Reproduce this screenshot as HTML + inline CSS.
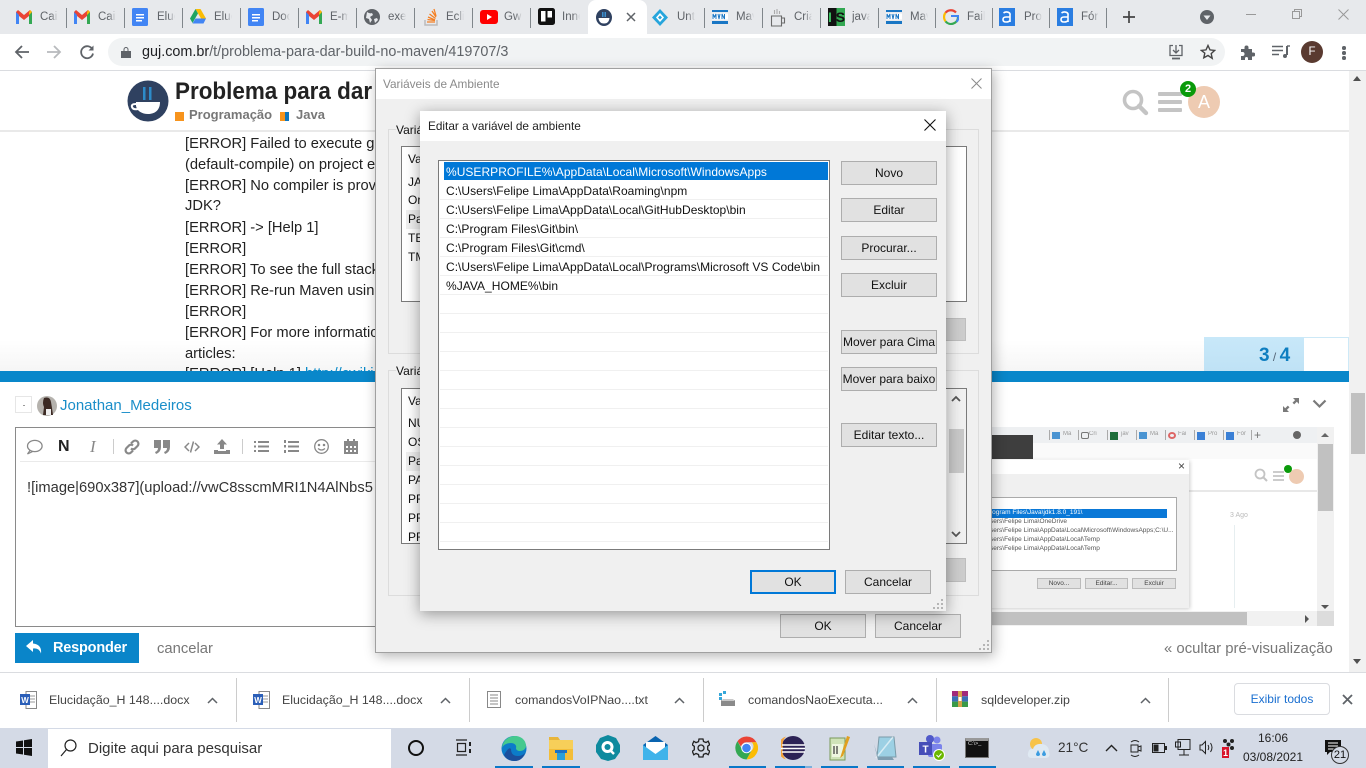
<!DOCTYPE html>
<html lang="pt-BR"><head><meta charset="utf-8"><title>Problema para dar build no maven</title>
<style>
*{box-sizing:border-box}
html,body{margin:0;padding:0;width:1366px;height:768px;overflow:hidden;background:#fff;font-family:"Liberation Sans",sans-serif}
.a,.t,svg.i{position:absolute}
.t{white-space:nowrap;line-height:20px;height:20px}
.tab{font-size:11.5px;color:#5f6368;top:7px;width:18px;overflow:hidden;-webkit-mask-image:linear-gradient(90deg,#000 60%,transparent);mask-image:linear-gradient(90deg,#000 60%,transparent)}
.sep{position:absolute;top:8px;width:1px;height:20px;background:#80868b}
.post{left:185px;font-size:14.7px;color:#222}
.btn{position:absolute;background:#e1e1e1;border:1px solid #adadad;font-size:12px;color:#111;text-align:center;line-height:22px;white-space:nowrap}
.row{position:absolute;left:446px;font-size:12px;letter-spacing:.03px;color:#111;white-space:nowrap;line-height:19px;height:19px}
.ln{position:absolute;left:440px;width:388px;height:1px;background:#f0f0f0}
.v{position:absolute;left:408px;font-size:12px;color:#111;line-height:19px;height:19px;white-space:nowrap}
.dl{font-size:12.4px;color:#444;top:690px}
.ds{position:absolute;top:678px;width:1px;height:44px;background:#ccc}
.ub{position:absolute;top:766px;height:2px;background:#0a78c8}
.mini{position:absolute;font-size:6.5px;color:#555;white-space:nowrap;filter:blur(.3px)}
.mt{position:absolute;top:5px;width:8px;height:7px}
.ms{position:absolute;top:3px;width:1px;height:10px;background:#aaa}
</style></head><body>

<!-- PAGE -->
<div class="a" style="left:0;top:71px;width:1349px;height:61px;background:#fff;border-bottom:2px solid #e9e9e9"></div>
<svg class="i" style="left:127px;top:80px" width="42" height="42" viewBox="0 0 42 42"><circle cx="21" cy="21" r="20.5" fill="#2f4160"/><rect x="16" y="7" width="2.5" height="13" fill="#2d8bc9"/><rect x="22" y="7" width="2.5" height="13" fill="#2d8bc9"/><path d="M9 22H33C33 31 27 34 21 34S10 31 9 26Z" fill="#fff"/><path d="M9 24q-5 0-4 3t6 2" stroke="#fff" stroke-width="2" fill="none"/></svg>
<div class="t" style="left:175px;top:81px;font-size:24px;line-height:22px;font-weight:bold;color:#222;transform:scaleX(.935);transform-origin:left">Problema para dar</div>
<div class="a" style="left:175px;top:112px;width:9px;height:9px;background:#f7941d"></div>
<div class="t" style="left:189px;top:105px;font-size:13px;font-weight:bold;color:#777">Programação</div>
<div class="a" style="left:280px;top:112px;width:5px;height:9px;background:#f7941d"></div><div class="a" style="left:285px;top:112px;width:4px;height:9px;background:#0e76bd"></div>
<div class="t" style="left:296px;top:105px;font-size:13px;font-weight:bold;color:#777">Java</div>
<svg class="i" style="left:1121px;top:88px" width="28" height="28" viewBox="0 0 28 28"><circle cx="12" cy="12" r="8.5" fill="none" stroke="#c4c4c4" stroke-width="3.6"/><path d="M18 18l7 7" stroke="#c4c4c4" stroke-width="4.4" stroke-linecap="round"/></svg>
<div class="a" style="left:1158px;top:92px;width:24px;height:4px;background:#c4c4c4;border-radius:1px"></div><div class="a" style="left:1158px;top:100px;width:24px;height:4px;background:#c4c4c4;border-radius:1px"></div><div class="a" style="left:1158px;top:108px;width:24px;height:4px;background:#c4c4c4;border-radius:1px"></div>
<div class="a" style="left:1188px;top:86px;width:32px;height:32px;border-radius:50%;background:#eecbb2;color:#fff;font-size:18px;line-height:33px;text-align:center">A</div>
<div class="a" style="left:1180px;top:81px;width:16px;height:16px;border-radius:50%;background:#0a9a0a;color:#fff;font-size:11px;font-weight:bold;line-height:16px;text-align:center">2</div>

<div class="a" style="left:0;top:340px;width:1349px;height:31px;background:linear-gradient(rgba(255,255,255,0),rgba(244,244,244,.85))"></div>
<div class="t post" style="top:134px">[ERROR] Failed to execute goal</div>
<div class="t post" style="top:155px">(default-compile) on project example</div>
<div class="t post" style="top:176px">[ERROR] No compiler is provided</div>
<div class="t post" style="top:196px">JDK?</div>
<div class="t post" style="top:218px">[ERROR] -&gt; [Help 1]</div>
<div class="t post" style="top:239px">[ERROR]</div>
<div class="t post" style="top:260px">[ERROR] To see the full stack trace</div>
<div class="t post" style="top:281px">[ERROR] Re-run Maven using</div>
<div class="t post" style="top:302px">[ERROR]</div>
<div class="t post" style="top:323px">[ERROR] For more information</div>
<div class="t post" style="top:344px">articles:</div>
<div class="t post" style="top:364px">[ERROR] [Help 1] <span style="color:#0a8ac8">http://cwiki</span></div>
<div class="a" style="left:1204px;top:337px;width:145px;height:34px;border:1px solid #cde9f7;border-bottom:0;background:#fff"></div>
<div class="a" style="left:1204px;top:337px;width:100px;height:34px;background:linear-gradient(#c8e8f9,#bfe2f5)"></div>
<div class="t" style="left:1259px;top:346px;font-size:19px;font-weight:bold;color:#0e7ec0">3<span style="font-size:12px;font-weight:normal;color:#567"> / </span>4</div>
<div class="a" style="left:0;top:371px;width:1349px;height:11px;background:#0987ca"></div>

<!-- editor -->
<div class="a" style="left:15px;top:396px;width:17px;height:17px;border:1px solid #e6e6e6;background:#fff"></div><div class="a" style="left:23px;top:405px;width:2px;height:1px;background:#999"></div>
<svg class="i" style="left:37px;top:396px" width="20" height="20" viewBox="0 0 20 20"><circle cx="10" cy="10" r="10" fill="#b5b2ad"/><path d="M7 2q6-2 7 4l1 6 1 7H6l1-8q-2-4 0-9Z" fill="#3c2a24"/><path d="M9 13h5v6H9Z" fill="#eee"/></svg>
<div class="t" style="left:60px;top:396px;font-size:15px;color:#1a8ec9">Jonathan_Medeiros</div>
<svg class="i" style="left:1282px;top:396px" width="18" height="18" viewBox="0 0 18 18" fill="#7a7a7a"><path d="M11 2h6v6l-2.2-2.2-2.6 2.6-1.7-1.7 2.6-2.6ZM7 16H1v-6l2.2 2.2 2.6-2.6 1.7 1.7-2.6 2.6Z"/></svg>
<svg class="i" style="left:1312px;top:398px" width="15" height="12" viewBox="0 0 15 12"><path d="M1.5 2.5L7.5 8.5 13.5 2.5" fill="none" stroke="#7a7a7a" stroke-width="2.2"/></svg>
<div class="a" style="left:15px;top:427px;width:370px;height:200px;border:1px solid #8a8a8a;background:#fff"></div>
<div class="a" style="left:20px;top:461px;width:365px;height:1px;background:#eaeaea"></div>
<svg class="i" style="left:26px;top:439px" width="17" height="16" viewBox="0 0 17 16"><ellipse cx="8.8" cy="7" rx="7.3" ry="5.6" fill="none" stroke="#888" stroke-width="1.3"/><path d="M4 11.5L1.5 15l5-2.4" fill="none" stroke="#888" stroke-width="1.2"/></svg>
<div class="t" style="left:58px;top:437px;font-size:16px;font-weight:bold;color:#222">N</div>
<div class="t" style="left:90px;top:437px;font-size:17px;font-style:italic;font-family:'Liberation Serif',serif;color:#888">I</div>
<div class="a" style="left:113px;top:439px;width:1px;height:15px;background:#ccc"></div>
<svg class="i" style="left:124px;top:439px" width="16" height="16" viewBox="0 0 16 16" fill="none" stroke="#888" stroke-width="2.2"><path d="M7 4.5l2-2a3 3 0 0 1 4.5 4.5l-2.5 2.5a3 3 0 0 1-4 0"/><path d="M9 11.5l-2 2a3 3 0 0 1-4.5-4.5L5 6.5a3 3 0 0 1 4 0"/></svg>
<svg class="i" style="left:154px;top:440px" width="16" height="14" viewBox="0 0 16 14" fill="#888"><path d="M0 0h7v7q0 5-5 7l-1-2q3-1 3-4H0ZM9 0h7v7q0 5-5 7l-1-2q3-1 3-4H9Z"/></svg>
<svg class="i" style="left:184px;top:440px" width="16" height="14" viewBox="0 0 16 14" fill="none" stroke="#888" stroke-width="1.5"><path d="M5 3L1 7l4 4M11 3l4 4-4 4M9.5 1.5L6.5 12.5"/></svg>
<svg class="i" style="left:214px;top:439px" width="16" height="15" viewBox="0 0 16 15" fill="#888"><path d="M8 0l5 5.5h-3V10H6V5.500H3ZM0 11h4v1h8v-1h4v4H0Z"/></svg>
<div class="a" style="left:242px;top:439px;width:1px;height:15px;background:#ccc"></div>
<svg class="i" style="left:254px;top:440px" width="15" height="13" viewBox="0 0 15 13" fill="#888"><path d="M0 1h2v2H0ZM4 1h11v2H4ZM0 5.500h2v2H0ZM4 5.500h11v2H4ZM0 10h2v2H0ZM4 10h11v2H4Z"/></svg>
<svg class="i" style="left:284px;top:440px" width="15" height="13" viewBox="0 0 15 13" fill="#888"><path d="M0 0h2v3H0ZM4 1h11v2H4ZM0 5h2v2.500H0ZM4 5.500h11v2H4ZM0 10h2v3H0ZM4 10h11v2H4Z"/></svg>
<svg class="i" style="left:314px;top:439px" width="15" height="15" viewBox="0 0 15 15" fill="none" stroke="#888" stroke-width="1.3"><circle cx="7.500" cy="7.500" r="6.800"/><circle cx="5" cy="6" r=".6"/><circle cx="10" cy="6" r=".6"/><path d="M4 9.500q3.500 3 7 0"/></svg>
<svg class="i" style="left:344px;top:439px" width="14" height="15" viewBox="0 0 14 15" fill="#888"><path d="M0 2h3V0h2v2h4V0h2v2h3v13H0Zm2 5v2h2V7Zm4 0v2h2V7Zm4 0v2h2V7Zm-8 4v2h2v-2Zm4 0v2h2v-2Zm4 0v2h2v-2Z"/></svg>
<div class="t" style="left:27px;top:478px;font-size:14.7px;color:#333">![image|690x387](upload://vwC8sscmMRI1N4AlNbs5</div>

<div class="a" style="left:15px;top:633px;width:124px;height:30px;background:#0a85c9"></div>
<svg class="i" style="left:26px;top:640px" width="17" height="15" viewBox="0 0 17 15" fill="#fff"><path d="M7 0L0 6l7 6V8.500q6-1 8 5 1-9-8-10Z"/></svg>
<div class="t" style="left:53px;top:638px;font-size:14.5px;font-weight:bold;color:#fff;letter-spacing:-.2px">Responder</div>
<div class="t" style="left:157px;top:639px;font-size:14.8px;color:#777">cancelar</div>
<div class="t" style="left:1164px;top:639px;font-size:14.9px;color:#777">« ocultar pré-visualização</div>

<!-- preview -->
<div class="a" style="left:985px;top:427px;width:349px;height:199px;background:#fff;overflow:hidden">
 <div class="a" style="left:0;top:0;width:349px;height:16px;background:#eef0f2"></div>
 <div class="a" style="left:0;top:16px;width:349px;height:16px;background:#fafafa"></div>
 <div class="mt" style="left:67px;background:#4a94d2;width:8px"></div><div class="mini" style="left:78px;top:4px;font-size:6px;color:#999">Ma</div><div class="ms" style="left:64px"></div>
 <div class="mini" style="left:104px;top:4px;font-size:6px;color:#999">Cri</div><div class="ms" style="left:93px"></div>
 <div class="mt" style="left:96px;background:none;border:1px solid #777;border-radius:2px"></div>
 <div class="mt" style="left:125px;background:#1d6e3a;height:8px"></div><div class="mini" style="left:136px;top:4px;font-size:6px;color:#999">jav</div><div class="ms" style="left:122px"></div>
 <div class="mt" style="left:154px;background:#4a94d2"></div><div class="mini" style="left:165px;top:4px;font-size:6px;color:#999">Ma</div><div class="ms" style="left:151px"></div>
 <div class="mt" style="left:183px;background:none;border:2px solid #d66;border-radius:50%"></div><div class="mini" style="left:193px;top:4px;font-size:6px;color:#999">Fai</div><div class="ms" style="left:180px"></div>
 <div class="mt" style="left:212px;background:#3a80d6;height:8px"></div><div class="mini" style="left:223px;top:4px;font-size:6px;color:#999">Pro</div><div class="ms" style="left:209px"></div>
 <div class="mt" style="left:241px;background:#3a80d6;height:8px"></div><div class="mini" style="left:252px;top:4px;font-size:6px;color:#999">Fór</div><div class="ms" style="left:238px"></div><div class="ms" style="left:266px"></div>
 <div class="t" style="left:269px;top:-2px;font-size:12px;color:#777">+</div>
 <div class="a" style="left:308px;top:4px;width:8px;height:8px;border-radius:50%;background:#666"></div>
 <div class="a" style="left:0;top:8px;width:48px;height:24px;background:#3e3e3e"></div>
 <div class="a" style="left:204px;top:63px;width:128px;height:2px;background:#e8e8e8"></div>
 <!-- mini dialog -->
 <div class="a" style="left:0;top:33px;width:204px;height:148px;background:#f0f0f0;box-shadow:1px 1px 4px rgba(0,0,0,.2)"></div>
 <div class="a" style="left:0;top:33px;width:204px;height:14px;background:#fff"></div>
 <div class="t" style="left:193px;top:29px;font-size:12px;color:#444">×</div>
 <div class="a" style="left:0;top:70px;width:192px;height:74px;background:#fff;border:1px solid #aaa;border-left:0"></div>
 <div class="a" style="left:0;top:82px;width:182px;height:9px;background:#0a78d7"></div>
 <div class="mini" style="left:5px;top:82px;color:#fff">rogram Files\Java\jdk1.8.0_191\</div>
 <div class="mini" style="left:5px;top:91px">sers\Felipe Lima\OneDrive</div>
 <div class="mini" style="left:5px;top:100px">sers\Felipe Lima\AppData\Local\Microsoft\WindowsApps;C:\U...</div>
 <div class="mini" style="left:5px;top:109px">sers\Felipe Lima\AppData\Local\Temp</div>
 <div class="mini" style="left:5px;top:118px">sers\Felipe Lima\AppData\Local\Temp</div>
 <div class="a" style="left:52px;top:151px;width:44px;height:11px;background:#e1e1e1;border:1px solid #bbb;font-size:6.500px;text-align:center;line-height:9px;color:#444">Novo...</div>
 <div class="a" style="left:100px;top:151px;width:43px;height:11px;background:#e1e1e1;border:1px solid #bbb;font-size:6.500px;text-align:center;line-height:9px;color:#444">Editar...</div>
 <div class="a" style="left:147px;top:151px;width:44px;height:11px;background:#e1e1e1;border:1px solid #bbb;font-size:6.500px;text-align:center;line-height:9px;color:#444">Excluir</div>
 <div class="a" style="left:249px;top:98px;width:1px;height:83px;background:#e6eef0"></div>
 <div class="mini" style="left:245px;top:85px;font-size:7px;color:#bbb">3 Ago</div>
 <svg class="i" style="left:269px;top:41px" width="14" height="14" viewBox="0 0 14 14"><circle cx="6" cy="6" r="4.500" fill="none" stroke="#c4c4c4" stroke-width="1.800"/><path d="M9 9l4 4" stroke="#c4c4c4" stroke-width="2"/></svg>
 <div class="a" style="left:288px;top:44px;width:11px;height:2px;background:#ccc"></div><div class="a" style="left:288px;top:48px;width:11px;height:2px;background:#ccc"></div><div class="a" style="left:288px;top:52px;width:11px;height:2px;background:#ccc"></div>
 <div class="a" style="left:304px;top:42px;width:15px;height:15px;border-radius:50%;background:#eecbb2"></div>
 <div class="a" style="left:299px;top:38px;width:8px;height:8px;border-radius:50%;background:#0a9a0a"></div>
 <!-- scrollbars -->
 <div class="a" style="left:332px;top:0;width:17px;height:199px;background:#f1f1f1"></div>
 <div class="a" style="left:333px;top:17px;width:15px;height:67px;background:#c1c1c1"></div>
 <div class="a" style="left:336px;top:6px;border:4px solid transparent;border-top:0;border-bottom:4px solid #666;width:0;height:0"></div>
 <div class="a" style="left:336px;top:178px;border:4px solid transparent;border-bottom:0;border-top:4px solid #555;width:0;height:0"></div>
 <div class="a" style="left:0;top:184px;width:349px;height:15px;background:#f1f1f1"></div>
 <div class="a" style="left:0;top:185px;width:262px;height:13px;background:#c1c1c1"></div>
 <div class="a" style="left:320px;top:188px;border:4px solid transparent;border-right:0;border-left:4px solid #555;width:0;height:0"></div>
 <div class="a" style="left:332px;top:184px;width:17px;height:15px;background:#dcdcdc"></div>
</div>

<!-- page scrollbar -->
<div class="a" style="left:1349px;top:71px;width:17px;height:601px;background:#f1f1f1"></div>
<div class="a" style="left:1351px;top:393px;width:14px;height:61px;background:#c1c1c1"></div>
<div class="a" style="left:1353px;top:76px;border:4px solid transparent;border-top:0;border-bottom:5px solid #505050;width:0;height:0"></div>
<div class="a" style="left:1353px;top:659px;border:4px solid transparent;border-bottom:0;border-top:5px solid #505050;width:0;height:0"></div>

<!-- CHROME -->
<div class="a" style="left:0;top:0;width:1366px;height:34px;background:#e7e9ec"></div>
<div class="a" style="left:0;top:34px;width:1366px;height:36px;background:#fff"></div>
<div class="a" style="left:0;top:70px;width:1366px;height:1px;background:#dadce0"></div>
<div class="a" style="left:588px;top:0;width:59px;height:34px;background:#fff;border-radius:8px 8px 0 0"></div>
<div class="sep" style="left:66px"></div><div class="sep" style="left:124px"></div><div class="sep" style="left:182px"></div><div class="sep" style="left:240px"></div><div class="sep" style="left:298px"></div><div class="sep" style="left:356px"></div><div class="sep" style="left:414px"></div><div class="sep" style="left:472px"></div><div class="sep" style="left:530px"></div>
<div class="sep" style="left:704px"></div><div class="sep" style="left:762px"></div><div class="sep" style="left:820px"></div><div class="sep" style="left:878px"></div><div class="sep" style="left:935px"></div><div class="sep" style="left:992px"></div><div class="sep" style="left:1049px"></div><div class="sep" style="left:1106px"></div>

<!-- favicons -->
<svg class="i" style="left:16px;top:10px" width="16" height="14" viewBox="0 0 16 14"><path d="M0 2v12h3V6l5 4 5-4v8h3V2L14 0 8 5 2 0Z" fill="#ea4335"/><path d="M0 2v12h3V5Z" fill="#4285f4"/><path d="M16 2v12h-3V5Z" fill="#34a853"/><path d="M13 2.500L14 0l2 2-3 3Z" fill="#fbbc04"/></svg>
<svg class="i" style="left:74px;top:10px" width="16" height="14" viewBox="0 0 16 14"><path d="M0 2v12h3V6l5 4 5-4v8h3V2L14 0 8 5 2 0Z" fill="#ea4335"/><path d="M0 2v12h3V5Z" fill="#4285f4"/><path d="M16 2v12h-3V5Z" fill="#34a853"/><path d="M13 2.500L14 0l2 2-3 3Z" fill="#fbbc04"/></svg>
<svg class="i" style="left:132px;top:8px" width="16" height="18" viewBox="0 0 16 18"><rect width="16" height="18" rx="1.500" fill="#4285f4"/><path d="M4 6h8v1.500H4ZM4 9h8v1.500H4ZM4 12h6v1.500H4Z" fill="#fff"/></svg>
<svg class="i" style="left:190px;top:9px" width="16" height="15" viewBox="0 0 16 15"><path d="M5.500 0h5l5.500 9.500h-5Z" fill="#fbbc04"/><path d="M5.500 0L0 9.500 2.500 14l5.500-9.500Z" fill="#1fa463"/><path d="M2.500 14.500h11l2.500-5H5.500Z" fill="#4285f4"/></svg>
<svg class="i" style="left:248px;top:8px" width="16" height="18" viewBox="0 0 16 18"><rect width="16" height="18" rx="1.500" fill="#4285f4"/><path d="M4 6h8v1.500H4ZM4 9h8v1.500H4ZM4 12h6v1.500H4Z" fill="#fff"/></svg>
<svg class="i" style="left:306px;top:10px" width="16" height="14" viewBox="0 0 16 14"><path d="M0 2v12h3V6l5 4 5-4v8h3V2L14 0 8 5 2 0Z" fill="#ea4335"/><path d="M0 2v12h3V5Z" fill="#4285f4"/><path d="M16 2v12h-3V5Z" fill="#34a853"/><path d="M13 2.500L14 0l2 2-3 3Z" fill="#fbbc04"/></svg>
<svg class="i" style="left:364px;top:9px" width="16" height="16" viewBox="0 0 16 16"><circle cx="8" cy="8" r="8" fill="#5f6368"/><path d="M3 3q3 2 5 1l1 2-3 2 2 3-2 3-1-4-3-1Zm7 7l3-1 1 2-3 3Z" fill="#e7e9ec"/></svg>
<svg class="i" style="left:423px;top:8px" width="16" height="18" viewBox="0 0 16 18" fill="none"><path d="M2 12v5h12v-5" stroke="#bcbbbb" stroke-width="1.500"/><path d="M4 14h8M4.500 11.500l7.500 1M5 9l7 3M6.500 6l6 4.500M9 3l4 6M11 1l2 7" stroke="#f48024" stroke-width="1.300"/></svg>
<svg class="i" style="left:480px;top:10px" width="18" height="14" viewBox="0 0 18 14"><rect width="18" height="14" rx="3" fill="#f00"/><path d="M7 4l5 3-5 3Z" fill="#fff"/></svg>
<svg class="i" style="left:538px;top:8px" width="17" height="17" viewBox="0 0 17 17"><rect width="17" height="17" rx="2.500" fill="#111"/><rect x="3" y="3" width="4.500" height="10.500" fill="#fff"/><rect x="9.500" y="3" width="4.500" height="6.500" fill="#fff"/></svg>
<svg class="i" style="left:596px;top:9px" width="16" height="17" viewBox="0 0 16 17"><ellipse cx="8" cy="8.500" rx="8" ry="8.500" fill="#2f4160"/><path d="M2.500 9H13.500C13 13 11 14.500 8 14.500S3 13 2.500 9Z" fill="#fff"/><rect x="6" y="3" width="1.500" height="5" fill="#3b8fcf"/><rect x="8.500" y="3" width="1.500" height="5" fill="#3b8fcf"/></svg>
<svg class="i" style="left:652px;top:9px" width="16" height="17" viewBox="0 0 16 17"><path d="M8 0l8 8.500-8 8.500-8-8.500Z" fill="#26a5dc"/><path d="M8 4l4 4.500-4 4.500-4-4.500Z" fill="#fff"/><path d="M8 6.500l2 2-2 2-2-2Z" fill="#26a5dc"/></svg>
<svg class="i" style="left:712px;top:10px" width="16" height="14" viewBox="0 0 16 14"><rect width="16" height="2" fill="#1976c4"/><rect y="11" width="16" height="3" fill="#1976c4"/><rect y="3.500" width="16" height="6" fill="#fff"/><path d="M1 9V4l1.500 3L4 4v5M6 4l1 5 1-5M10 9V4l2.500 5V4" stroke="#1976c4" stroke-width="1" fill="none"/></svg>
<svg class="i" style="left:770px;top:8px" width="16" height="19" viewBox="0 0 16 19" fill="none" stroke="#6a6a6a" stroke-width="1.100"><path d="M1.500 8h10v10h-10ZM11.500 10h3v5h-3"/><path d="M4.500 6V2M7 6V1M9.500 6V3" stroke="#aaa"/></svg>
<svg class="i" style="left:828px;top:8px" width="17" height="18" viewBox="0 0 17 18"><rect width="8.500" height="18" fill="#111"/><rect x="8.500" width="8.500" height="18" fill="#33a852"/></svg>
<div class="t" style="left:828px;top:7px;width:17px;font-size:14px;color:#111;text-align:center"><span style="color:#3ac060;font-weight:bold">I</span> <span style="font-weight:bold">S</span></div>
<svg class="i" style="left:886px;top:10px" width="16" height="14" viewBox="0 0 16 14"><rect width="16" height="2" fill="#1976c4"/><rect y="11" width="16" height="3" fill="#1976c4"/><rect y="3.500" width="16" height="6" fill="#fff"/><path d="M1 9V4l1.500 3L4 4v5M6 4l1 5 1-5M10 9V4l2.500 5V4" stroke="#1976c4" stroke-width="1" fill="none"/></svg>
<svg class="i" style="left:943px;top:9px" width="16" height="16" viewBox="0 0 16 16"><path d="M15 8a7 7 0 0 1-12.500 4.300" stroke="#34a853" stroke-width="2.200" fill="none"/><path d="M2.500 12.300A7 7 0 0 1 2.500 3.700" stroke="#fbbc04" stroke-width="2.200" fill="none"/><path d="M2.500 3.700A7 7 0 0 1 13 3.500" stroke="#ea4335" stroke-width="2.200" fill="none"/><path d="M8 7h7.500v1.800a7 7 0 0 1-2 4" stroke="#4285f4" stroke-width="2" fill="none"/></svg>
<svg class="i" style="left:999px;top:8px" width="16" height="18" viewBox="0 0 16 18"><rect width="16" height="18" fill="#2a7de1"/><path d="M4.500 5q2-1.500 4.500-.800t2 3V14M11 9H7q-3 0-3 2.500T7 14q3 0 4-1.500" stroke="#fff" stroke-width="1.600" fill="none"/></svg>
<svg class="i" style="left:1057px;top:8px" width="16" height="18" viewBox="0 0 16 18"><rect width="16" height="18" fill="#2a7de1"/><path d="M4.500 5q2-1.500 4.500-.800t2 3V14M11 9H7q-3 0-3 2.500T7 14q3 0 4-1.500" stroke="#fff" stroke-width="1.600" fill="none"/></svg>

<div class="t tab" style="left:40px">Caixa</div><div class="t tab" style="left:98px">Caixa</div><div class="t tab" style="left:157px">Eluc</div><div class="t tab" style="left:214px">Eluc</div><div class="t tab" style="left:272px">Doc</div><div class="t tab" style="left:330px">E-m</div><div class="t tab" style="left:388px">exe</div><div class="t tab" style="left:446px">Eclip</div><div class="t tab" style="left:504px;width:18px">Gw</div><div class="t tab" style="left:562px">Inne</div>
<div class="t tab" style="left:677px">Unt</div><div class="t tab" style="left:736px">Mav</div><div class="t tab" style="left:794px">Cria</div><div class="t tab" style="left:852px">java</div><div class="t tab" style="left:910px">Mav</div><div class="t tab" style="left:967px">Fail</div><div class="t tab" style="left:1024px">Pro</div><div class="t tab" style="left:1081px">Fór</div>
<svg class="i" style="left:626px;top:12px" width="10" height="10" viewBox="0 0 10 10"><path d="M1 1l8 8M9 1L1 9" stroke="#5f6368" stroke-width="1.500"/></svg>
<svg class="i" style="left:1122px;top:10px" width="14" height="14" viewBox="0 0 14 14"><path d="M7 1v12M1 7h12" stroke="#444" stroke-width="1.700"/></svg>
<svg class="i" style="left:1200px;top:10px" width="14" height="14" viewBox="0 0 14 14"><circle cx="7" cy="7" r="7" fill="#5f6368"/><path d="M3.500 5.500h7L7 10Z" fill="#e7e9ec"/></svg>
<div class="a" style="left:1246px;top:14px;width:10px;height:1px;background:#999"></div>
<svg class="i" style="left:1292px;top:9px" width="10" height="10" viewBox="0 0 10 10" fill="none" stroke="#999"><path d="M.5 2.500h7v7h-7ZM2.500 2.500v-2h7v7h-2"/></svg>
<svg class="i" style="left:1338px;top:9px" width="11" height="11" viewBox="0 0 11 11"><path d="M.5.5l10 10M10.500.5l-10 10" stroke="#999"/></svg>

<!-- toolbar -->
<svg class="i" style="left:14px;top:44px" width="16" height="16" viewBox="0 0 16 16" fill="none" stroke="#5f6368" stroke-width="1.800"><path d="M15 8H2M8 2L2 8l6 6"/></svg>
<svg class="i" style="left:46px;top:44px" width="16" height="16" viewBox="0 0 16 16" fill="none" stroke="#b8babd" stroke-width="1.800"><path d="M1 8h13M8 2l6 6-6 6"/></svg>
<svg class="i" style="left:79px;top:44px" width="16" height="16" viewBox="0 0 16 16" fill="none" stroke="#5f6368" stroke-width="1.800"><path d="M13.500 5.500A6 6 0 1 0 14 9.500"/><path d="M14.500 1.500v5h-5" fill="#5f6368" stroke="none"/></svg>
<div class="a" style="left:108px;top:38px;width:1117px;height:28px;border-radius:14px;background:#f1f3f4"></div>
<svg class="i" style="left:121px;top:46px" width="10" height="12" viewBox="0 0 10 12" fill="#5f6368"><path d="M2.500 5V3.500a2.500 2.500 0 0 1 5 0V5H10v7H0V5Zm1 0h3V3.500a1.500 1.500 0 0 0-3 0Z"/></svg>
<div class="t" style="left:142px;top:42px;font-size:14.4px;color:#5f6368"><span style="color:#202124">guj.com.br</span>/t/problema-para-dar-build-no-maven/419707/3</div>
<svg class="i" style="left:1168px;top:44px" width="16" height="16" viewBox="0 0 16 16" fill="none" stroke="#5f6368" stroke-width="1.300"><path d="M5 1.500H2v10h12v-10h-3M8 1v7M5 6l3 3 3-3"/><path d="M4 14.500h8" stroke-width="1.800"/></svg>
<svg class="i" style="left:1200px;top:44px" width="16" height="16" viewBox="0 0 16 16" fill="none" stroke="#444" stroke-width="1.400"><path d="M8 1.500l2 4.400 4.700.5-3.500 3.200 1 4.700L8 11.500l-4.200 2.300 1-4.700L1.300 6.400 6 5.900Z"/></svg>
<svg class="i" style="left:1240px;top:45px" width="15" height="15" viewBox="0 0 15 15" fill="#5f6368"><path d="M1 4h3.500V2.500a2 2 0 0 1 4 0V4H12v3.500h1.200a2 2 0 0 1 0 4H12V15H8v-1.500a1.500 1.500 0 0 0-3 0V15H1v-4h1.500a2 2 0 0 0 0-4H1Z"/></svg>
<svg class="i" style="left:1272px;top:45px" width="18" height="14" viewBox="0 0 18 14" fill="none" stroke="#5f6368" stroke-width="1.400"><path d="M0 1.500h11M0 5.500h11M0 9.500h7"/><path d="M15 1v9" stroke-width="2"/><path d="M15 1h3" /><circle cx="13" cy="11" r="2" fill="#5f6368" stroke="none"/></svg>
<div class="a" style="left:1301px;top:41px;width:22px;height:22px;border-radius:50%;background:#5a3a30;color:#fff;font-size:11.500px;line-height:22px;text-align:center">F</div>
<div class="a" style="left:1342px;top:46px;width:3.500px;height:3.500px;border-radius:50%;background:#5f6368"></div><div class="a" style="left:1342px;top:51px;width:3.500px;height:3.500px;border-radius:50%;background:#5f6368"></div><div class="a" style="left:1342px;top:56px;width:3.500px;height:3.500px;border-radius:50%;background:#5f6368"></div>

<!-- DIALOG 1 -->
<div class="a" style="left:375px;top:68px;width:617px;height:585px;background:#f0f0f0;border:1px solid #a0a0a0;box-shadow:2px 3px 12px rgba(0,0,0,.3)"></div>
<div class="a" style="left:376px;top:69px;width:615px;height:30px;background:#fff"></div>
<div class="t" style="left:383px;top:74px;font-size:11.800px;color:#8a8a8a">Variáveis de Ambiente</div>
<svg class="i" style="left:971px;top:78px" width="11" height="11" viewBox="0 0 11 11"><path d="M.5.5l10 10M10.500.5l-10 10" stroke="#8a8a8a"/></svg>
<div class="a" style="left:388px;top:129px;width:591px;height:225px;border:1px solid #dcdcdc"></div>
<div class="t" style="left:396px;top:120px;font-size:12px;color:#111;background:#f0f0f0;padding-right:4px">Variá</div>
<div class="a" style="left:401px;top:146px;width:566px;height:156px;background:#fff;border:1px solid #7a7a7a"></div>
<div class="v" style="top:150px">Va</div><div class="v" style="top:173px">JA</div><div class="v" style="top:191px">Or</div><div class="a" style="left:406px;top:210px;width:16px;height:19px;background:#efefef"></div><div class="v" style="top:210px">Pa</div><div class="v" style="top:229px">TE</div><div class="v" style="top:248px">TM</div>
<div class="a" style="left:940px;top:318px;width:26px;height:23px;background:#ccc;border:1px solid #bdbdbd"></div>
<div class="a" style="left:388px;top:370px;width:591px;height:226px;border:1px solid #dcdcdc"></div>
<div class="t" style="left:396px;top:361px;font-size:12px;color:#111;background:#f0f0f0;padding-right:4px">Variá</div>
<div class="a" style="left:401px;top:388px;width:566px;height:156px;background:#fff;border:1px solid #7a7a7a"></div>
<div class="a" style="left:406px;top:452px;width:16px;height:19px;background:#efefef"></div>
<div class="v" style="top:392px">Va</div><div class="v" style="top:414px">NU</div><div class="v" style="top:433px">OS</div><div class="v" style="top:452px">Pa</div><div class="v" style="top:471px">PA</div><div class="v" style="top:490px">PR</div><div class="v" style="top:509px">PR</div><div class="v" style="top:528px">PR</div>
<div class="a" style="left:947px;top:389px;width:19px;height:154px;background:#f0f0f0"></div>
<div class="a" style="left:949px;top:429px;width:15px;height:44px;background:#c8c8c8"></div>
<svg class="i" style="left:951px;top:395px" width="10" height="8" viewBox="0 0 10 8"><path d="M1 6l4-4 4 4" fill="none" stroke="#555" stroke-width="1.800"/></svg>
<svg class="i" style="left:951px;top:530px" width="10" height="8" viewBox="0 0 10 8"><path d="M1 2l4 4 4-4" fill="none" stroke="#555" stroke-width="1.800"/></svg>
<div class="a" style="left:940px;top:558px;width:26px;height:24px;background:#ccc;border:1px solid #bdbdbd"></div>
<div class="btn" style="left:780px;top:614px;width:86px;height:24px">OK</div>
<div class="btn" style="left:875px;top:614px;width:86px;height:24px">Cancelar</div>
<svg class="i" style="left:979px;top:640px" width="11" height="11" viewBox="0 0 11 11" fill="#b5b5b5"><path d="M8 0h2v2H8ZM4 4h2v2H4ZM8 4h2v2H8ZM0 8h2v2H0ZM4 8h2v2H4ZM8 8h2v2H8Z"/></svg>

<!-- DIALOG 2 -->
<div class="a" style="left:420px;top:111px;width:526px;height:500px;background:#f0f0f0;box-shadow:0 3px 14px rgba(0,0,0,.38)"></div>
<div class="a" style="left:420px;top:111px;width:526px;height:30px;background:#fff"></div>
<div class="t" style="left:428px;top:116px;font-size:11.800px;color:#222">Editar a variável de ambiente</div>
<svg class="i" style="left:924px;top:119px" width="12" height="12" viewBox="0 0 12 12"><path d="M.5.5l11 11M11.500.5l-11 11" stroke="#111" stroke-width="1.100"/></svg>
<div class="a" style="left:438px;top:160px;width:392px;height:390px;background:#fff;border:1px solid #7a7a7a"></div>
<div class="ln" style="top:199px"></div><div class="ln" style="top:218px"></div><div class="ln" style="top:237px"></div><div class="ln" style="top:256px"></div><div class="ln" style="top:275px"></div><div class="ln" style="top:294px"></div><div class="ln" style="top:313px"></div><div class="ln" style="top:332px"></div><div class="ln" style="top:351px"></div><div class="ln" style="top:370px"></div><div class="ln" style="top:389px"></div><div class="ln" style="top:408px"></div><div class="ln" style="top:427px"></div><div class="ln" style="top:446px"></div><div class="ln" style="top:465px"></div><div class="ln" style="top:484px"></div><div class="ln" style="top:503px"></div><div class="ln" style="top:522px"></div><div class="ln" style="top:541px"></div>
<div class="a" style="left:444px;top:162px;width:384px;height:18px;background:#0078d7"></div>
<div class="row" style="top:163px;color:#fff">%USERPROFILE%\AppData\Local\Microsoft\WindowsApps</div>
<div class="row" style="top:182px">C:\Users\Felipe Lima\AppData\Roaming\npm</div>
<div class="row" style="top:201px">C:\Users\Felipe Lima\AppData\Local\GitHubDesktop\bin</div>
<div class="row" style="top:220px">C:\Program Files\Git\bin\</div>
<div class="row" style="top:239px">C:\Program Files\Git\cmd\</div>
<div class="row" style="top:258px">C:\Users\Felipe Lima\AppData\Local\Programs\Microsoft VS Code\bin</div>
<div class="row" style="top:277px">%JAVA_HOME%\bin</div>
<div class="btn" style="left:841px;top:161px;width:96px;height:24px">Novo</div>
<div class="btn" style="left:841px;top:198px;width:96px;height:24px">Editar</div>
<div class="btn" style="left:841px;top:236px;width:96px;height:24px">Procurar...</div>
<div class="btn" style="left:841px;top:273px;width:96px;height:24px">Excluir</div>
<div class="btn" style="left:841px;top:330px;width:96px;height:24px">Mover para Cima</div>
<div class="btn" style="left:841px;top:367px;width:96px;height:24px">Mover para baixo</div>
<div class="btn" style="left:841px;top:423px;width:96px;height:24px">Editar texto...</div>
<div class="btn" style="left:750px;top:570px;width:86px;height:24px;border:2px solid #0078d7;line-height:20px">OK</div>
<div class="btn" style="left:845px;top:570px;width:86px;height:24px">Cancelar</div>
<svg class="i" style="left:933px;top:599px" width="11" height="11" viewBox="0 0 11 11" fill="#b5b5b5"><path d="M8 0h2v2H8ZM4 4h2v2H4ZM8 4h2v2H8ZM0 8h2v2H0ZM4 8h2v2H4ZM8 8h2v2H8Z"/></svg>

<!-- DOWNLOAD SHELF -->
<div class="a" style="left:0;top:672px;width:1366px;height:56px;background:#fff;border-top:1px solid #dadce0"></div>
<div class="ds" style="left:236px"></div><div class="ds" style="left:469px"></div><div class="ds" style="left:703px"></div><div class="ds" style="left:936px"></div><div class="ds" style="left:1168px"></div>
<svg class="i" style="left:20px;top:691px" width="17" height="18" viewBox="0 0 17 18"><path d="M6 .5h10.500v17H6Z" fill="#fff" stroke="#888"/><path d="M10 5h5M10 8h5M10 11h5" stroke="#999"/><rect y="3" width="10" height="11" fill="#2b5fb8"/><text x="5" y="12" font-size="8" font-weight="bold" fill="#fff" text-anchor="middle" font-family="Liberation Sans">W</text></svg>
<svg class="i" style="left:253px;top:691px" width="17" height="18" viewBox="0 0 17 18"><path d="M6 .5h10.500v17H6Z" fill="#fff" stroke="#888"/><path d="M10 5h5M10 8h5M10 11h5" stroke="#999"/><rect y="3" width="10" height="11" fill="#2b5fb8"/><text x="5" y="12" font-size="8" font-weight="bold" fill="#fff" text-anchor="middle" font-family="Liberation Sans">W</text></svg>
<svg class="i" style="left:487px;top:691px" width="14" height="17" viewBox="0 0 14 17" fill="none" stroke="#888"><path d="M.5.500h13v16H.5ZM3 4h8M3 7h8M3 10h8M3 13h8"/></svg>
<svg class="i" style="left:718px;top:691px" width="18" height="16" viewBox="0 0 18 16"><path d="M1 2h3v3H1ZM5 0h3v3H5ZM1 6h3v3H1Z" fill="#35a7d9"/><path d="M3 9h14v6H3Z" fill="#8a8a8a"/><path d="M5 8h10l2 2H3Z" fill="#c9c9c9"/></svg>
<svg class="i" style="left:952px;top:691px" width="16" height="16" viewBox="0 0 16 16"><rect width="16" height="5.300" fill="#a12a7a"/><rect y="5.300" width="16" height="5.300" fill="#3a6fb5"/><rect y="10.600" width="16" height="5.400" fill="#3a9a48"/><rect x="6" width="4" height="16" fill="#d4a24a"/><rect x="6.500" y="6" width="3" height="4" fill="#fff"/></svg>
<div class="t dl" style="left:49px">Elucidação_H 148....docx</div>
<div class="t dl" style="left:282px">Elucidação_H 148....docx</div>
<div class="t dl" style="left:515px">comandosVoIPNao....txt</div>
<div class="t dl" style="left:748px">comandosNaoExecuta...</div>
<div class="t dl" style="left:981px">sqldeveloper.zip</div>
<svg class="i" style="left:207px;top:697px" width="11" height="7" viewBox="0 0 11 7"><path d="M1 6l4.500-4.500L10 6" fill="none" stroke="#5f6368" stroke-width="1.500"/></svg>
<svg class="i" style="left:440px;top:697px" width="11" height="7" viewBox="0 0 11 7"><path d="M1 6l4.500-4.500L10 6" fill="none" stroke="#5f6368" stroke-width="1.500"/></svg>
<svg class="i" style="left:674px;top:697px" width="11" height="7" viewBox="0 0 11 7"><path d="M1 6l4.500-4.500L10 6" fill="none" stroke="#5f6368" stroke-width="1.500"/></svg>
<svg class="i" style="left:907px;top:697px" width="11" height="7" viewBox="0 0 11 7"><path d="M1 6l4.500-4.500L10 6" fill="none" stroke="#5f6368" stroke-width="1.500"/></svg>
<svg class="i" style="left:1140px;top:697px" width="11" height="7" viewBox="0 0 11 7"><path d="M1 6l4.500-4.500L10 6" fill="none" stroke="#5f6368" stroke-width="1.500"/></svg>
<div class="a" style="left:1234px;top:683px;width:96px;height:32px;border:1px solid #dadce0;border-radius:4px;color:#1a6fd0;font-size:12px;line-height:30px;text-align:center">Exibir todos</div>
<svg class="i" style="left:1342px;top:694px" width="11" height="11" viewBox="0 0 11 11"><path d="M1 1l9 9M10 1l-9 9" stroke="#5f6368" stroke-width="1.800"/></svg>

<!-- TASKBAR -->
<div class="a" style="left:0;top:728px;width:1366px;height:40px;background:#d4dae6"></div>
<svg class="i" style="left:16px;top:739px" width="16" height="17" viewBox="0 0 16 17" fill="#111"><path d="M0 2.500l7-1v6.500H0ZM8 1.300L16 0v8H8ZM0 9h7v6.500l-7-1ZM8 9h8v8l-8-1.300Z"/></svg>
<div class="a" style="left:48px;top:729px;width:343px;height:39px;background:#fff"></div>
<svg class="i" style="left:60px;top:739px" width="17" height="18" viewBox="0 0 17 18" fill="none" stroke="#222" stroke-width="1.200"><circle cx="10.500" cy="6.500" r="5.500"/><path d="M6.500 10.500L1 17"/></svg>
<div class="t" style="left:88px;top:739px;font-size:15px;color:#333">Digite aqui para pesquisar</div>
<div class="a" style="left:408px;top:740px;width:16px;height:16px;border-radius:50%;border:2.500px solid #111"></div>
<svg class="i" style="left:455px;top:739px" width="17" height="17" viewBox="0 0 17 17" fill="none" stroke="#222" stroke-width="1.200"><path d="M1 1h11M1 16h11M2.500 4.500h8v8h-8Z"/><path d="M14 3h2v4h-2ZM14 10h2v4h-2Z" fill="#222" stroke="none"/></svg>
<svg class="i" style="left:501px;top:735px" width="26" height="27" viewBox="0 0 26 27"><circle cx="13" cy="13.500" r="12.500" fill="#0c7cc9"/><path d="M1 13C2 4 9 1 14 1c6 0 11 4 11 10 0 3-3 5-6 5-2 0-4-1-4-3 1-3-2-5-5-5-4 0-8 2-9 5Z" fill="#45c98e"/><path d="M10 14q0 7 7 7 4 0 7-3-3 8-10 8-8 0-11-6 5-9 7-6Z" fill="#1b4f9c"/></svg>
<svg class="i" style="left:549px;top:736px" width="24" height="24" viewBox="0 0 24 24"><path d="M0 1h9l2 3H0Z" fill="#e8b53a"/><rect y="4" width="24" height="20" fill="#f7cf59"/><rect y="13" width="24" height="11" fill="#f3bd38"/><path d="M8 24v-8h8v8" fill="#2a9fd8"/><rect x="6" y="14" width="12" height="3" fill="#1a72c4"/></svg>
<svg class="i" style="left:596px;top:735px" width="24" height="26" viewBox="0 0 24 26"><path d="M12 0l8 3 4 7v7l-5 7-7 2-7-2-5-7v-7l4-7Z" fill="#0e8a9e"/><circle cx="11.500" cy="12" r="6" fill="#fff"/><circle cx="11.500" cy="12" r="3" fill="#0e8a9e"/><path d="M14 15l4 4" stroke="#fff" stroke-width="2.500"/></svg>
<svg class="i" style="left:643px;top:736px" width="25" height="24" viewBox="0 0 25 24"><path d="M12.500 0L25 9v15H0V9Z" fill="#0a64b0"/><rect x="3" y="6" width="19" height="12" fill="#fff"/><path d="M0 9l12.500 9L25 9v15H0Z" fill="#3fb3ea"/></svg>
<svg class="i" style="left:692px;top:738px" width="18" height="20" viewBox="0 0 18 20" fill="none" stroke="#222" stroke-width="1.300"><path d="M7 1h4l.500 2.500 2.500 1 2.200-1.300 1.500 3.500-2 1.500v3.500l2 1.500-1.500 3.500-2.200-1.300-2.500 1L11 19H7l-.5-2.500-2.500-1-2.200 1.300L.3 13.300l2-1.500V8.300l-2-1.500 1.500-3.500L4 4.600l2.500-1Z"/><circle cx="9" cy="10" r="3"/></svg>
<svg class="i" style="left:735px;top:736px" width="23" height="24" viewBox="0 0 24 24"><path d="M12 0a12 12 0 0 1 10.400 6H12a6 6 0 0 0-5.800 4.500L2.600 5A12 12 0 0 1 12 0Z" fill="#ea4335"/><path d="M22.400 6A12 12 0 0 1 12 24l5-9a6 6 0 0 0 .5-9Z" fill="#fbbc04"/><path d="M12 24A12 12 0 0 1 2.600 5l5 9a6 6 0 0 0 9.400 1Z" fill="#34a853"/><circle cx="12" cy="12" r="5" fill="#4285f4" stroke="#fff"/></svg>
<svg class="i" style="left:781px;top:736px" width="24" height="24" viewBox="0 0 24 24"><circle cx="12" cy="12" r="12" fill="#2c2255"/><path d="M5 0.500A12 12 0 0 0 5 23.500 13 13 0 0 1 2 12 13 13 0 0 1 5 .5Z" fill="#f4a23a"/><path d="M1 9h23M0 12.500h24M1 16h23" stroke="#fff" stroke-width="1.500"/></svg>
<svg class="i" style="left:829px;top:735px" width="22" height="26" viewBox="0 0 22 26"><path d="M1 3h15v22H1Z" fill="#cfe3b8" stroke="#7a9a5a"/><path d="M3 9h11v13H3Z" fill="#eef6e0"/><path d="M5 11v8M8 11v8" stroke="#444" stroke-width="1.300"/><path d="M18 1L12 20l-1 3 3-2 7-19Z" fill="#e0a020"/></svg>
<svg class="i" style="left:873px;top:736px" width="24" height="24" viewBox="0 0 24 24"><path d="M6 1h15l2 20H4Z" fill="#9cd0e4" stroke="#7a9aa8"/><path d="M3 22l17-21" stroke="#fff" stroke-width="1.500" opacity=".6"/><path d="M1 8l4 16h16l-2-3H5Z" fill="#7e9db0"/></svg>
<svg class="i" style="left:919px;top:735px" width="26" height="26" viewBox="0 0 26 26"><circle cx="18" cy="5" r="3.500" fill="#7b83eb"/><circle cx="11" cy="4" r="4" fill="#5059c9"/><rect x="9" y="9" width="14" height="13" rx="2" fill="#7b83eb"/><rect y="7" width="13" height="13" fill="#464eb8"/><text x="6.500" y="17.500" font-size="10" font-weight="bold" fill="#fff" text-anchor="middle" font-family="Liberation Sans">T</text><circle cx="20" cy="20" r="5.500" fill="#6bb700" stroke="#fff"/><path d="M17.500 20l2 2 3-3.500" stroke="#fff" fill="none"/></svg>
<div class="a" style="left:965px;top:738px;width:24px;height:20px;background:#111;border:1px solid #777;border-top:3px solid #999"></div>
<div class="t" style="left:968px;top:734px;font-size:5.500px;color:#ddd">C:\>_</div>
<div class="ub" style="left:495px;width:38px"></div><div class="ub" style="left:542px;width:38px"></div><div class="ub" style="left:729px;width:37px"></div><div class="ub" style="left:775px;width:30px"></div><div class="ub" style="left:805px;width:7px;background:#7cb0dc"></div><div class="ub" style="left:821px;width:37px"></div><div class="ub" style="left:867px;width:37px"></div><div class="ub" style="left:913px;width:37px"></div><div class="ub" style="left:959px;width:37px"></div>
<svg class="i" style="left:1027px;top:737px" width="24" height="22" viewBox="0 0 24 22"><circle cx="9" cy="7" r="6" fill="#f7c34a"/><path d="M5 21q-5 0-4-5t5-4q2-6 9-5t7 8q2 5-3 6Z" fill="#dfe9f2"/><path d="M11 13l-2 4q0 2 2 2t2-2ZM17 13l-2 4q0 2 2 2t2-2Z" fill="#3b9ce0"/></svg>
<div class="t" style="left:1058px;top:738px;font-size:13.600px;color:#333">21°C</div>
<svg class="i" style="left:1105px;top:744px" width="13" height="8" viewBox="0 0 13 8"><path d="M1 7l5.500-5.500L12 7" fill="none" stroke="#222" stroke-width="1.400"/></svg>
<svg class="i" style="left:1129px;top:739px" width="13" height="19" viewBox="0 0 13 19" fill="none" stroke="#222"><path d="M2 3q4-3 8 0M2 16q4 3 8 0M2 6h7v7H2ZM9 8l3-1v5l-3-1"/></svg>
<svg class="i" style="left:1152px;top:743px" width="15" height="10" viewBox="0 0 15 10"><path d="M.5.5h12v9H.5Z" fill="none" stroke="#222"/><rect x="1.500" y="1.500" width="5" height="7" fill="#222"/><rect x="13" y="3" width="2" height="4" fill="#222"/></svg>
<svg class="i" style="left:1175px;top:739px" width="16" height="18" viewBox="0 0 16 18" fill="none" stroke="#222"><path d="M3 .5h12v10H3ZM9 10.500v5M4 16h10M.5 3h5v5h-5Z"/></svg>
<svg class="i" style="left:1199px;top:740px" width="15" height="15" viewBox="0 0 15 15" fill="none" stroke="#222"><path d="M1 5h2l3.500-3.500v12L3 10H1ZM9 5q1.500 2.500 0 5M11.500 3q3 4.500 0 9"/></svg>
<svg class="i" style="left:1222px;top:738px" width="13" height="20" viewBox="0 0 13 20"><circle cx="3" cy="3" r="2" fill="#222"/><circle cx="10" cy="3" r="2" fill="#222"/><circle cx="6.500" cy="6.500" r="2" fill="#222"/><circle cx="10" cy="10" r="2" fill="#222"/><rect x="0" y="9" width="7" height="11" fill="#d8132a"/><text x="3.500" y="18" font-size="9" font-weight="bold" fill="#fff" text-anchor="middle" font-family="Liberation Sans">1</text></svg>
<div class="t" style="left:1241px;top:728px;width:64px;text-align:center;font-size:12px;color:#222">16:06</div>
<div class="t" style="left:1241px;top:747px;width:64px;text-align:center;font-size:12px;color:#222">03/08/2021</div>
<svg class="i" style="left:1325px;top:740px" width="16" height="16" viewBox="0 0 16 16"><path d="M0 0h16v12H5l-3 3v-3H0Z" fill="#111"/><path d="M3 3h10M3 6h10M3 9h7" stroke="#fff"/></svg>
<div class="a" style="left:1331px;top:746px;width:18px;height:18px;border-radius:50%;background:#d4dae6;border:1px solid #333;font-size:11px;color:#111;line-height:16px;text-align:center">21</div>
</body></html>
